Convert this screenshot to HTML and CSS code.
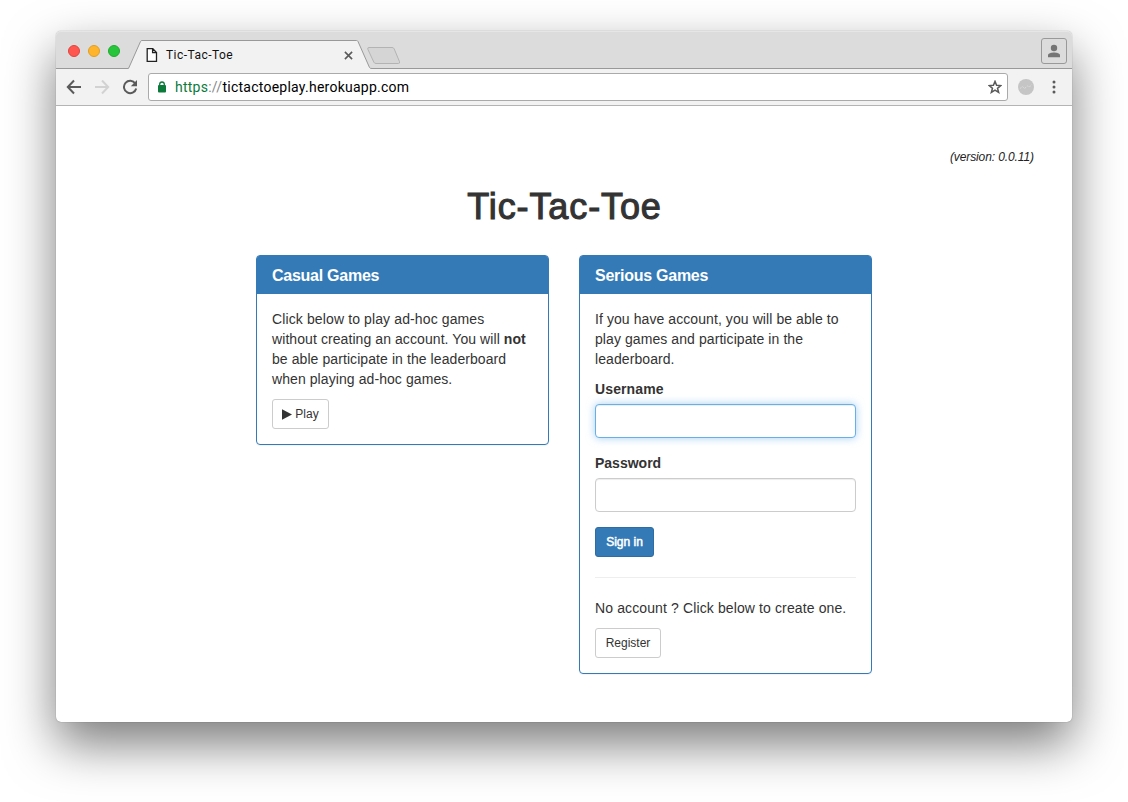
FILE: index.html
```html
<!DOCTYPE html>
<html lang="en">
<head>
<meta charset="utf-8">
<title>Tic-Tac-Toe</title>
<link rel="stylesheet" href="styles.css">
</head>
<body>
<div class="window">
  <div class="titlebar">
    <div class="lights"><i class="light red"></i><i class="light amber"></i><i class="light green"></i></div>
    <div class="tab">
      <svg class="tab-shape" width="244" height="30" viewBox="0 0 244 30"><path d="M0 29.500L12.500 1.500Q13 .5 14 .5H228.500Q229.500 .5 230 1.500L241.500 27.500Q242 28.500 244 28.500V30H0Z" fill="#f2f2f2"/><path d="M0 28.500Q.8 28.300 1.200 27L12.500 1.500Q13 .5 14 .5H228.500Q229.500 .5 230 1.500L241.500 27.500Q242 28.500 244 28.500" fill="none" stroke="#999"/></svg>
      <svg class="doc" width="12" height="14" viewBox="0 0 12 14"><path d="M1.2.7h5.600l3.700 3.800v8.800H1.200zM6.600.9v3.800h3.800" fill="#fff" stroke="#222" stroke-width="1.300"/></svg>
      <span class="tab-title">Tic-Tac-Toe</span>
      <svg class="close" width="9" height="9" viewBox="0 0 9 9"><path d="M.9.9l7.200 7.200M8.100.9L.9 8.100" stroke="#5a5a5a" stroke-width="1.600"/></svg>
    </div>
    <svg class="newtab" width="34" height="17" viewBox="0 0 34 17"><path d="M2 .5h23q1.600 0 2.200 1.400l5.300 12.800q.6 1.800-1.200 1.800H9q-1.600 0-2.200-1.400L.8 2.200Q.3.500 2 .5z" fill="#d5d5d5" stroke="#b3b3b3"/></svg>
    <div class="profile"><svg width="14" height="14" viewBox="0 0 14 14"><circle cx="7" cy="4" r="3.200" fill="#757575"/><path d="M1 13.300v-2C1 9.300 4.500 8.500 7 8.500s6 .8 6 2.800v2z" fill="#757575"/></svg></div>
  </div>
  <div class="toolbar">
    <svg class="nav" width="16" height="16" viewBox="0 0 16 16"><path d="M15 8H2M8 1.500L1.800 8 8 14.500" fill="none" stroke="#5a5a5a" stroke-width="2"/></svg>
    <svg class="nav" width="16" height="16" viewBox="0 0 16 16"><path d="M1 8h13M8 1.500L14.200 8 8 14.500" fill="none" stroke="#d2d2d2" stroke-width="2"/></svg>
    <svg class="nav" width="16" height="16" viewBox="0 0 16 16"><path d="M13.300 4.500A6.200 6.200 0 1 0 14.200 9.500" fill="none" stroke="#5a5a5a" stroke-width="2"/><path d="M15 1v6.200H8.800z" fill="#5a5a5a"/></svg>
    <div class="address">
      <svg class="lock" width="8" height="12" viewBox="0 0 8 12"><rect y="4" width="8" height="7.500" rx="1" fill="#0b7a3b"/><path d="M1.700 5V3.300a2.300 2.300 0 0 1 4.600 0V5" fill="none" stroke="#0b7a3b" stroke-width="1.300"/></svg>
      <span class="url"><span class="scheme">https</span><span class="slashes">://</span>tictactoeplay.herokuapp.com</span>
      <svg class="star" width="14" height="14" viewBox="0 0 15 15"><path d="M7.500 1.500l1.700 4.200 4.500.3-3.500 2.900 1.200 4.400-3.900-2.400-3.900 2.400 1.200-4.400L1.300 6l4.500-.3z" fill="none" stroke="#5a5a5a" stroke-width="1.600"/></svg>
    </div>
    <svg class="ext" width="16" height="16" viewBox="0 0 16 16"><circle cx="8" cy="8" r="8" fill="#c5c5c5"/><path d="M2 9.500l2.500-2 2 2 3-2.500 2 1 2-2.500" fill="none" stroke="#dcdcdc" stroke-dasharray="2 1"/></svg>
    <svg class="dots" width="4" height="14" viewBox="0 0 4 14"><g fill="#5a5a5a"><circle cx="2" cy="2" r="1.500"/><circle cx="2" cy="7" r="1.500"/><circle cx="2" cy="12" r="1.500"/></g></svg>
  </div>
  <main class="page">
    <div class="version">(version: 0.0.11)</div>
    <h1>Tic-Tac-Toe</h1>
    <div class="panels">
      <section class="panel">
        <h2>Casual Games</h2>
        <div class="panel-body">
          <p><span class="wide">Click below to play ad-hoc games</span><br>without creating an account. You will <b>not</b><br>be able participate in the leaderboard<br>when playing ad-hoc games.</p>
          <button class="btn play"><svg width="10" height="11" viewBox="0 0 10 11"><path d="M0 .3v10.400L10 5.500z" fill="#333"/></svg><span>Play</span></button>
        </div>
      </section>
      <section class="panel">
        <h2>Serious Games</h2>
        <div class="panel-body">
          <p>If you have account, you will be able to<br>play games and participate in the<br>leaderboard.</p>
          <label class="user">Username</label>
          <input class="field focused" type="text">
          <label>Password</label>
          <input class="field" type="password">
          <button class="btn primary">Sign in</button>
          <hr>
          <p class="wide">No account ? Click below to create one.</p>
          <button class="btn register">Register</button>
        </div>
      </section>
    </div>
  </main>
</div>
</body>
</html>
```
FILE: styles.css
```css
* { box-sizing: border-box; }
body { margin: 0; height: 802px; overflow: hidden; padding: 31px 56px; background: #fff; color: #333; font: 14px/20px "Liberation Sans", Arial, sans-serif; }
svg { display: block; flex: none; }
.window { width: 1016px; height: 691px; background: #fff; border-radius: 5px; box-shadow: 0 0 1px rgba(0,0,0,.5), 0 22px 50px rgba(0,0,0,.52); }
.titlebar { display: flex; height: 38px; padding: 0 5px 0 12px; background: #dcdcdc; border-bottom: 1px solid #999; border-radius: 5px 5px 0 0; box-shadow: inset 0 1px #e6e6e6; }
.lights { display: flex; gap: 8px; padding-top: 14px; width: 60px; }
.light { width: 12px; height: 12px; border-radius: 50%; border: 1px solid; }
.red { background: #ff5650; border-color: #e0443e; }
.amber { background: #ffb42b; border-color: #dea023; }
.green { background: #27c53a; border-color: #1fab2e; }
.tab { position: relative; display: flex; align-items: center; width: 244px; height: 30px; margin-top: 9px; padding: 0 18px; }
.tab-shape { position: absolute; left: 0; top: 0; }
.doc, .tab-title, .close { position: relative; }
.tab-title { font: 12px/16px Roboto, sans-serif; color: #111; margin-left: 8px; letter-spacing: .45px; }
.close { margin-left: auto; margin-right: 1px; }
.newtab { margin: 16px 0 0 -5px; }
.profile { display: flex; align-items: center; justify-content: center; width: 26px; height: 26px; margin: 7px 0 0 auto; border: 1px solid #999; border-radius: 3px; }
.toolbar { display: flex; align-items: center; height: 37px; padding: 0 16px 0 10px; background: #f2f2f2; border-bottom: 1px solid #b4b4b4; }
.nav { margin-right: 12px; }
.address { display: flex; align-items: center; width: 860px; height: 28px; margin-left: -2px; padding: 0 5px 0 9px; background: #fff; border: 1px solid #aaa; border-radius: 3px; }
.url { margin-left: 9px; font: 14px/18px Roboto, sans-serif; color: #000; letter-spacing: .25px; }
.scheme { color: #0b7a3b; }
.slashes { color: #888; }
.star { margin-left: auto; }
.ext { margin-left: 10px; }
.dots { margin-left: auto; }
.page { padding-top: 41px; }
.version { padding-right: 38px; text-align: right; font-size: 12px; font-style: italic; color: #222; letter-spacing: -.1px; }
h1 { margin: 20px 0 28px; padding-left: 1px; text-align: center; font-size: 36px; line-height: 40px; font-weight: 400; letter-spacing: .9px; -webkit-text-stroke: 1.1px #333; }
.panels { display: flex; justify-content: center; align-items: flex-start; gap: 30px; }
.panel { width: 293px; border: 1px solid #337ab7; border-radius: 4px; box-shadow: 0 1px 1px rgba(0,0,0,.05); }
h2 { margin: 0; padding: 11px 15px 9px; background: #337ab7; color: #fff; font-size: 16px; line-height: 18px; font-weight: 700; letter-spacing: -.26px; border-radius: 2px 2px 0 0; }
.panel-body { padding: 15px; }
p { margin: 0 0 10px; white-space: nowrap; letter-spacing: .08px; }
.wide { letter-spacing: .12px; }
label { display: block; margin-bottom: 5px; font-weight: 700; }
.user { letter-spacing: .12px; }
.field { display: block; width: 100%; height: 34px; margin: 0 0 15px; border: 1px solid #ccc; border-radius: 4px; background: #fff; box-shadow: inset 0 1px 1px rgba(0,0,0,.075); outline: 0; }
.focused { border-color: #66afe9; box-shadow: inset 0 1px 1px rgba(0,0,0,.075), 0 0 8px rgba(102,175,233,.6); }
.btn { display: flex; align-items: center; justify-content: center; gap: 3px; height: 30px; padding: 0; border: 1px solid #ccc; border-radius: 3px; background: #fff; color: #333; font: 12px/18px "Liberation Sans", Arial, sans-serif; }
.play { width: 57px; }
.primary { width: 59px; background: #337ab7; border-color: #2e6da4; color: #fff; -webkit-text-stroke: .5px #fff; }
.register { width: 66px; }
hr { height: 1px; margin: 20px 0; border: 0; background: #eee; }
```
